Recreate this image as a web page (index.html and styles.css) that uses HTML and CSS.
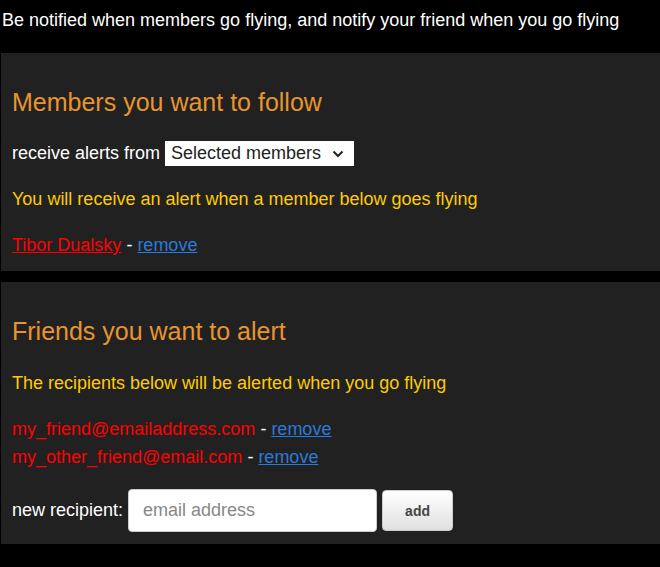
FILE: index.html
```html
<!DOCTYPE html>
<html>
<head>
<meta charset="utf-8">
<link rel="stylesheet" href="styles.css">
</head>
<body>
<div class="intro">Be notified when members go flying, and notify your friend when you go flying</div>

<section class="panel panel-follow">
  <h2 class="title">Members you want to follow</h2>
  <div class="row-select">
    <span class="label">receive alerts from</span>
    <div class="select">
      <span>Selected members</span>
      <svg class="chev" width="12" height="8" viewBox="0 0 12 8"><path d="M1.5 1.5 L6 6 L10.5 1.5" fill="none" stroke="#222" stroke-width="2"/></svg>
    </div>
  </div>
  <p class="note note-follow">You will receive an alert when a member below goes flying</p>
  <div class="entry entry-follow"><a class="name" href="#">Tibor Dualsky</a> - <a class="remove" href="#">remove</a></div>
</section>

<section class="panel panel-alert">
  <h2 class="title">Friends you want to alert</h2>
  <p class="note note-alert">The recipients below will be alerted when you go flying</p>
  <div class="list">
    <div class="entry"><span class="email">my_friend@emailaddress.com</span> - <a class="remove" href="#">remove</a></div>
    <div class="entry"><span class="email">my_other_friend@email.com</span> - <a class="remove" href="#">remove</a></div>
  </div>
  <div class="row-add">
    <span class="label">new recipient:</span>
    <input class="input" type="text" placeholder="email address">
    <button class="btn">add</button>
  </div>
</section>
</body>
</html>
```

FILE: styles.css
```css
html, body {
  margin: 0;
  padding: 0;
  background: #000;
}
body {
  font-family: "Liberation Sans", Arial, sans-serif;
  font-size: 18px;
  color: #fff;
}
.intro {
  padding: 9px 0 0 2px;
  line-height: 22px;
  height: 44px;
}
.panel {
  background: #212121;
  margin-left: 1px;
  padding: 35px 12px 0 11px;
}
.panel-follow {
  height: 183px;
}
.panel-alert {
  margin-top: 11px;
  height: 227px;
}
.title {
  margin: 0;
  font-weight: normal;
  font-size: 25px;
  line-height: 28px;
  color: #e8952f;
}
.row-select {
  margin-top: 25px;
  display: flex;
  align-items: center;
  height: 25px;
}
.label {
  margin-right: 5px;
}
.select {
  width: 189px;
  height: 25px;
  box-sizing: border-box;
  background: #fff;
  color: #222;
  display: flex;
  align-items: center;
  justify-content: space-between;
  padding: 0 10px 0 6px;
  line-height: 25px;
}
.chev {
  display: block;
}
.note {
  margin: 0;
  color: #ffcc00;
  line-height: 22px;
}
.note-follow {
  margin-top: 22px;
}
.note-alert {
  margin-top: 27px;
}
.entry {
  line-height: 22px;
}
.entry-follow {
  margin-top: 24px;
}
.name {
  color: #ff0000;
}
.email {
  color: #ff0000;
}
.remove {
  color: #2b7bd8;
}
.list {
  margin-top: 21px;
}
.list .entry {
  line-height: 28px;
}
.row-add {
  margin-top: 18px;
  display: flex;
  align-items: center;
}
.input {
  width: 249px;
  height: 43px;
  box-sizing: border-box;
  border: 1px solid #ccc;
  border-radius: 4px;
  padding: 0 14px;
  font-family: "Liberation Sans", Arial, sans-serif;
  font-size: 18px;
  color: #333;
  outline: none;
}
.input::placeholder {
  color: #888;
}
.btn {
  margin-left: 5px;
  width: 71px;
  height: 41px;
  box-sizing: border-box;
  border: 1px solid #ccc;
  border-radius: 4px;
  background: linear-gradient(#ffffff, #e0e0e0);
  font-family: "Liberation Sans", Arial, sans-serif;
  font-weight: bold;
  font-size: 14px;
  color: #444;
  padding: 0;
}
```
